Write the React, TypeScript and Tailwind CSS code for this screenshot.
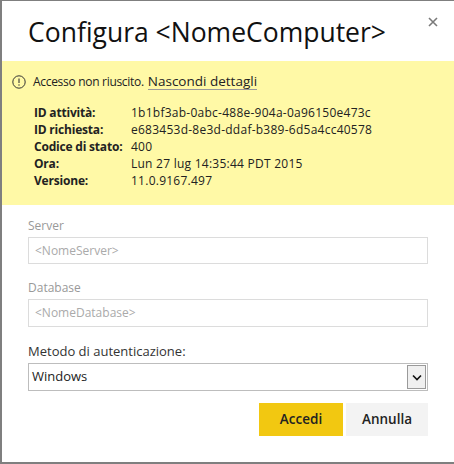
export default function App() {
  const details = [
    { label: "ID attività:", value: "1b1bf3ab-0abc-488e-904a-0a96150e473c" },
    { label: "ID richiesta:", value: "e683453d-8e3d-ddaf-b389-6d5a4cc40578" },
    { label: "Codice di stato:", value: "400" },
    { label: "Ora:", value: "Lun 27 lug 14:35:44 PDT 2015" },
    { label: "Versione:", value: "11.0.9167.497" },
  ];

  return (
    <div
      className="w-[454px] h-[464px] bg-white border-t border-l-2 border-b-2 border-[#7f7f7f] flex flex-col text-[#222]"
      style={{ fontFamily: '"Open Sans", "Noto Sans", sans-serif' }}
    >
      <div className="relative h-[60px] flex items-start">
        <h1 className="ml-[26px] mt-[14px] text-[26.5px] leading-[34px] text-[#111]">
          Configura &lt;NomeComputer&gt;
        </h1>
        <svg className="absolute right-[16px] top-[16px]" width="10" height="10" viewBox="0 0 10 10">
          <path d="M1 1L9 9M9 1L1 9" stroke="#7a7a7a" strokeWidth="1.6" />
        </svg>
      </div>

      <div className="bg-[#fff9a6] h-[144px] pt-[12px] pl-[10px]">
        <div className="flex items-center text-[12px] leading-[18px]">
          <svg width="14" height="14" viewBox="0 0 14 14" className="mr-[7px]">
            <circle cx="7" cy="7" r="6.2" fill="none" stroke="#333" strokeWidth="1" />
            <path d="M7 3.5V8" stroke="#333" strokeWidth="1.1" />
            <circle cx="7" cy="10" r="0.7" fill="#333" />
          </svg>
          <span className="tracking-[-0.3px]">Accesso non riuscito.</span>
          <span className="ml-[4px] text-[13.5px] border-b border-[#999] leading-[15px]">Nascondi dettagli</span>
        </div>
        <div className="mt-[13px] pl-[22px] text-[12px] leading-[17px]">
          {details.map((d) => (
            <div key={d.label} className="flex">
              <span className="w-[97px] font-bold tracking-[-0.2px]">{d.label}</span>
              <span className="tracking-[0.25px]">{d.value}</span>
            </div>
          ))}
        </div>
      </div>

      <div className="px-[26px] pt-[13px] text-[12px]">
        <div className="text-[#999] leading-[16px]">Server</div>
        <div className="mt-[3px] h-[27px] border border-[#dcdcdc] flex items-center px-[6px] text-[#aaa]">
          &lt;NomeServer&gt;
        </div>
        <div className="mt-[16px] text-[#999] leading-[16px]">Database</div>
        <div className="mt-[3px] h-[28px] border border-[#dcdcdc] flex items-center px-[6px] text-[#aaa]">
          &lt;NomeDatabase&gt;
        </div>
        <div className="mt-[16px] text-[#333] text-[13px] leading-[16px]">Metodo di autenticazione:</div>
        <div className="mt-[4px] h-[28px] border border-[#bdbdbd] flex items-center">
          <span className="flex-1 pl-[3px] text-[13px] text-[#222]">Windows</span>
          <div className="w-[19px] h-[24px] mr-[1px] border border-[#9a9a9a] bg-[#f0f0f0] flex items-center justify-center">
            <svg width="10" height="7" viewBox="0 0 10 7">
              <path d="M1 1.5L5 5.5L9 1.5" fill="none" stroke="#111" strokeWidth="1.6" />
            </svg>
          </div>
        </div>
        <div className="mt-[12px] flex justify-end gap-[3px]">
          <button className="w-[84px] h-[33px] bg-[#f2c811] text-[13.5px] font-semibold text-[#222]">Accedi</button>
          <button className="w-[82px] h-[33px] bg-[#f3f3f3] text-[13.5px] font-semibold text-[#222]">Annulla</button>
        </div>
      </div>
    </div>
  );
}
